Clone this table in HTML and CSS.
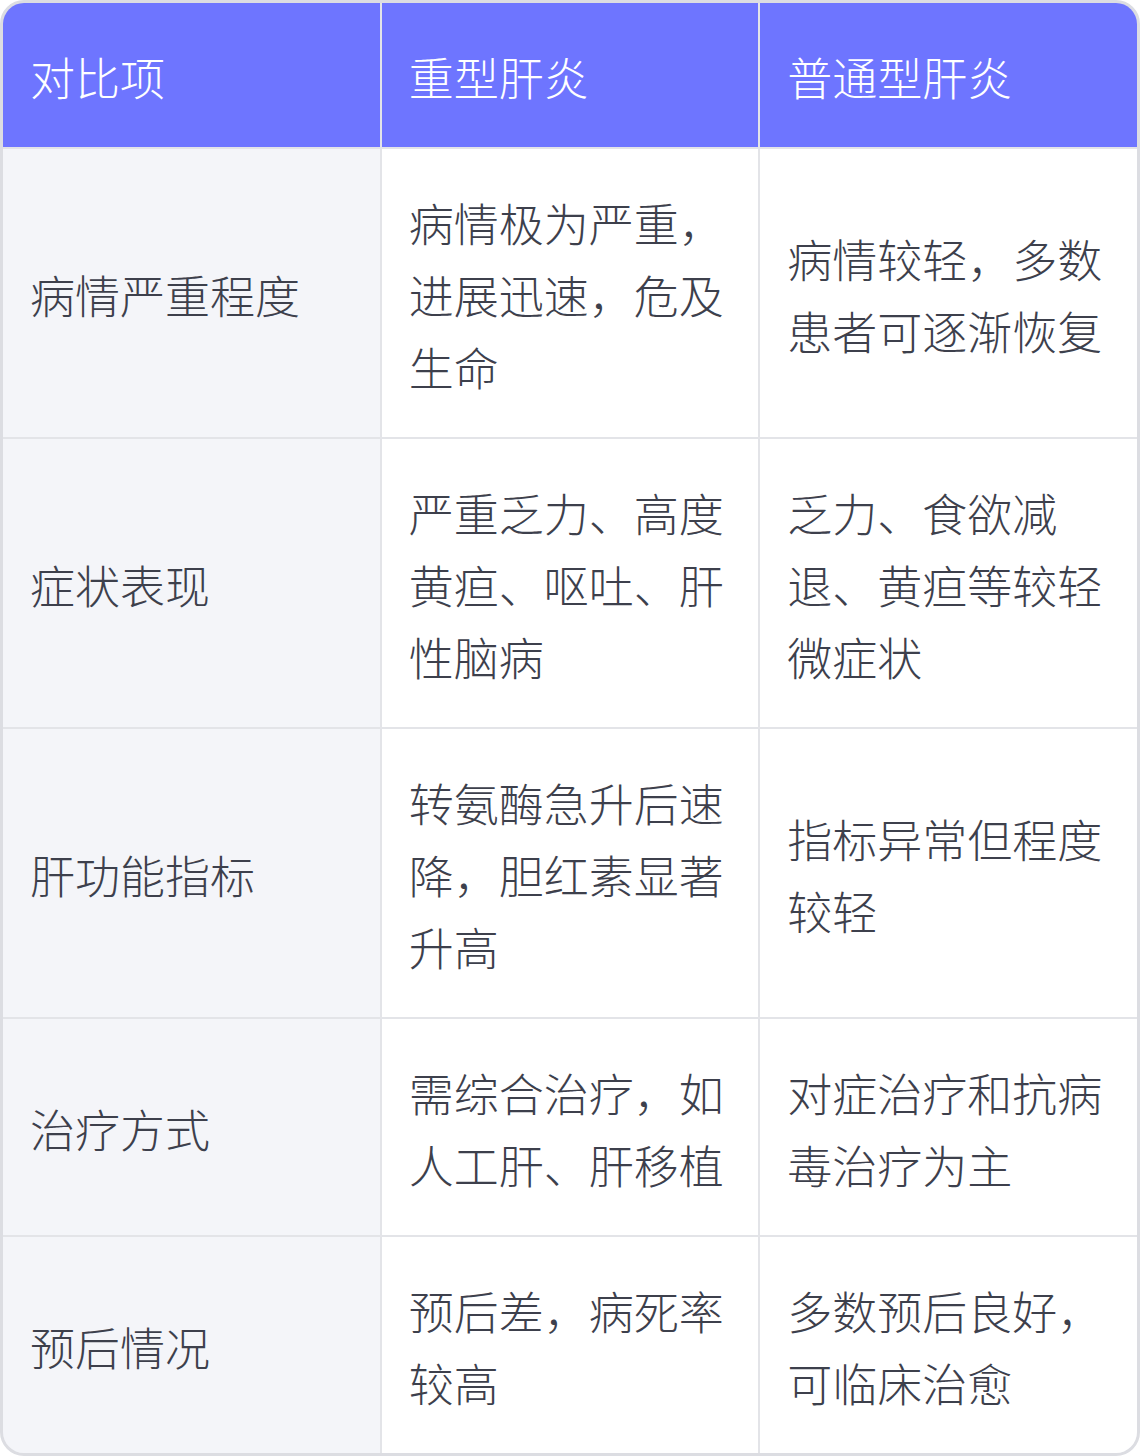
FILE: index.html
```html
<!DOCTYPE html>
<html lang="zh-CN">
<head>
<meta charset="utf-8">
<link rel="stylesheet" href="styles.css">
</head>
<body>
<div class="table">
  <div class="cell head">对比项</div>
  <div class="cell head">重型肝炎</div>
  <div class="cell head">普通型肝炎</div>

  <div class="cell label">病情严重程度</div>
  <div class="cell">病情极为严重，进展迅速，危及生命</div>
  <div class="cell">病情较轻，多数患者可逐渐恢复</div>

  <div class="cell label">症状表现</div>
  <div class="cell">严重乏力、高度黄疸、呕吐、肝性脑病</div>
  <div class="cell">乏力、食欲减退、黄疸等较轻微症状</div>

  <div class="cell label">肝功能指标</div>
  <div class="cell">转氨酶急升后速降，胆红素显著升高</div>
  <div class="cell">指标异常但程度较轻</div>

  <div class="cell label">治疗方式</div>
  <div class="cell">需综合治疗，如人工肝、肝移植</div>
  <div class="cell">对症治疗和抗病毒治疗为主</div>

  <div class="cell label">预后情况</div>
  <div class="cell">预后差，病死率较高</div>
  <div class="cell">多数预后良好，可临床治愈</div>
</div>
</body>
</html>
```

FILE: styles.css
```css
html, body {
  margin: 0;
  padding: 0;
  background: #ffffff;
}

.table {
  width: 1140px;
  height: 1456px;
  box-sizing: border-box;
  border: 3px solid #dcdde2;
  border-radius: 24px;
  overflow: hidden;
  display: grid;
  grid-template-columns: 1fr 1fr 1fr;
  grid-template-rows: 144px 288px 288px 288px 216px 216px;
  gap: 2px;
  background: #e3e4e8;
  font-family: "Noto Sans CJK SC", "Noto Sans", sans-serif;
  font-weight: 300;
  font-size: 45px;
  line-height: 72px;
  color: #3d404c;
}

.cell {
  background: #ffffff;
  padding: 4px 27px 0 27px;
  display: flex;
  align-items: center;
  word-break: break-all;
}

.head {
  background: #6e75ff;
  color: #ffffff;
}

.label {
  background: #f4f5f9;
}
```
